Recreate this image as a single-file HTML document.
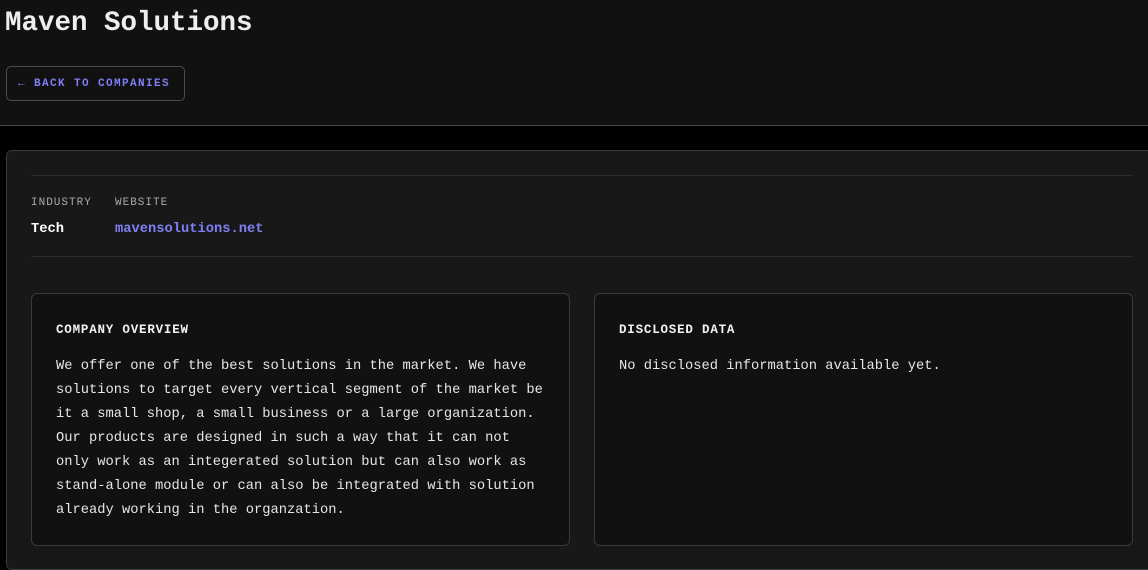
<!DOCTYPE html>
<html><head><style>
*{margin:0;padding:0;box-sizing:border-box}
body{width:1148px;height:552px;overflow:hidden;background:#000;font-family:"Liberation Mono",monospace;color:#e8e8e8}
.hdr{position:absolute;left:0;top:0;width:1148px;height:126px;background:#111;border-bottom:1px solid #4a4a4a}
h1{position:absolute;left:5px;top:6px;font-size:27.5px;font-weight:bold;color:#eee;line-height:36px}
.btn{position:absolute;left:6px;top:66px;width:179px;height:35px;border:1px solid #4a4a4a;border-radius:5px;color:#7f7ff5;font-size:11px;font-weight:bold;letter-spacing:1.4px;line-height:35px;padding-left:11px}
.card{position:absolute;left:6px;top:150px;width:1160px;height:420px;background:#181818;border:1px solid #3a3a3a;border-radius:6px}
.ln{position:absolute;left:24px;width:1102px;height:1px;background:#2c2c2c}
.lbl{position:absolute;top:46px;font-size:11px;color:#aaa;letter-spacing:1px}
.val{position:absolute;top:71px;font-size:13.75px;font-weight:bold}
.box{position:absolute;top:142px;height:253px;width:539px;background:#111;border:1px solid #3a3a3a;border-radius:6px;padding:0 24px}
.box h3{margin-top:29px;font-size:12.5px;font-weight:bold;letter-spacing:.8px;color:#f2f2f2}
.box p{margin-top:18px;font-size:13.75px;line-height:24px;color:#e6e6e6}
</style></head><body>
<div class="hdr"><h1>Maven Solutions</h1><div class="btn">← BACK TO COMPANIES</div></div>
<div class="card">
<div class="ln" style="top:24px"></div>
<div class="lbl" style="left:24px">INDUSTRY</div>
<div class="lbl" style="left:108px">WEBSITE</div>
<div class="val" style="left:24px;color:#fff">Tech</div>
<div class="val" style="left:108px;color:#8080f5">mavensolutions.net</div>
<div class="ln" style="top:105px"></div>
<div class="box" style="left:24px"><h3>COMPANY OVERVIEW</h3><p>We offer one of the best solutions in the market. We have solutions to target every vertical segment of the market be it a small shop, a small business or a large organization. Our products are designed in such a way that it can not only work as an integerated solution but can also work as stand-alone module or can also be integrated with solution already working in the organzation.</p></div>
<div class="box" style="left:587px"><h3>DISCLOSED DATA</h3><p>No disclosed information available yet.</p></div>
</div>
</body></html>
